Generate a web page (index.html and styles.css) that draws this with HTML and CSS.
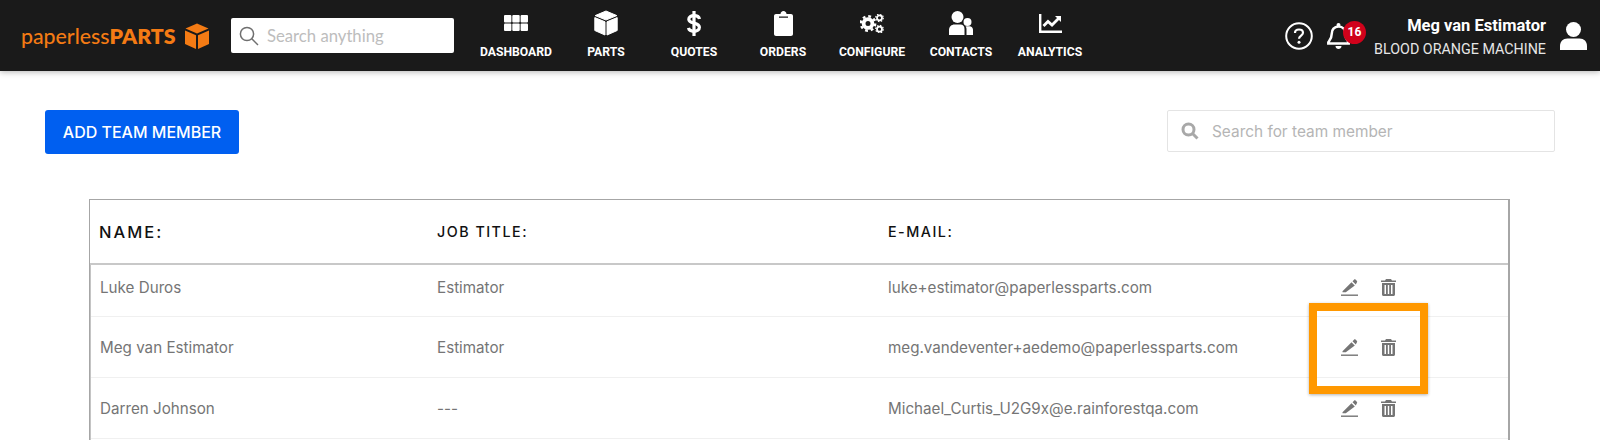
FILE: index.html
```html
<!DOCTYPE html>
<html lang="en">

<head>
    <meta charset="utf-8">
    <meta name="viewport" content="width=device-width, initial-scale=1.0">
    <title>Team members</title>

    <link rel="stylesheet" href="styles.css">
</head>

<body>
    <header class="topbar">
        <a class="logo">
            <span class="logo-text">paperless<b>PARTS</b></span>
            <svg class="logo-cube" viewBox="0 0 24 26"><path d="M12 0.500 23.500 5.500 12 10.500 0.500 5.500Z"/><path d="M0 7.500 11 12.300V26L0 21Z"/><path d="M24 7.500 13 12.300V26L24 21Z"/></svg>
        </a>
        <div class="global-search">
            <svg viewBox="0 0 20 20"><circle cx="8" cy="8" r="6.600"/><path d="M12.800 12.800 19 19"/></svg>
            <span>Search anything</span>
        </div>
        <nav class="main-nav">
            <a class="nav-item">
                <span class="nav-icon"><svg width="24" height="16" viewBox="0 0 24 16" fill="#fff"><rect width="7.400" height="7.400" rx="1"/><rect x="8.300" width="7.400" height="7.400" rx="1"/><rect x="16.600" width="7.400" height="7.400" rx="1"/><rect y="8.600" width="7.400" height="7.400" rx="1"/><rect x="8.300" y="8.600" width="7.400" height="7.400" rx="1"/><rect x="16.600" y="8.600" width="7.400" height="7.400" rx="1"/></svg></span>
                DASHBOARD
            </a>
            <a class="nav-item">
                <span class="nav-icon"><svg width="24" height="26" viewBox="0 0 24 26" fill="#fff" stroke="#fff" stroke-width="1" stroke-linejoin="round"><path d="M12 1 22.800 5.600 12 10 1.200 5.600Z"/><path d="M0.800 7.600 11 11.800V25L0.800 20.500Z"/><path d="M23.200 7.600 13 11.800V25L23.200 20.500Z"/></svg></span>
                PARTS
            </a>
            <a class="nav-item">
                <span class="nav-icon"><svg width="14" height="25" viewBox="0 0 14 25" fill="none" stroke="#fff" stroke-width="3.200"><path d="M12.500 8C12 5.500 10 4.700 7 4.700 4 4.700 1.800 5.900 1.800 8.300 1.800 10.900 4.500 11.500 7 12.100 9.700 12.800 12.400 13.500 12.400 16.300 12.400 18.900 10 20.300 7 20.300 4 20.300 2 19.300 1.500 16.900"/><path d="M7 0V25"/></svg></span>
                QUOTES
            </a>
            <a class="nav-item">
                <span class="nav-icon"><svg width="19" height="25" viewBox="0 0 19 25" fill="#fff"><path d="M2 3H6.500C6.500 1.400 7.800 0 9.500 0S12.500 1.400 12.500 3H17C18.100 3 19 3.900 19 5V23C19 24.100 18.100 25 17 25H2C0.900 25 0 24.100 0 23V5C0 3.900 0.900 3 2 3ZM5 5.500V6.800H14V5.500Z" fill-rule="evenodd"/></svg></span>
                ORDERS
            </a>
            <a class="nav-item">
                <span class="nav-icon"><svg width="24" height="19" viewBox="0 0 24 19" fill="none"><circle cx="8" cy="9.500" r="4.400" stroke="#fff" stroke-width="3.800"/><circle cx="8" cy="9.500" r="7.200" stroke="#fff" stroke-width="2.400" stroke-dasharray="2.800 2.860"/><circle cx="19.500" cy="3.800" r="2.500" stroke="#fff" stroke-width="1.800"/><circle cx="19.500" cy="3.800" r="3.800" stroke="#fff" stroke-width="1.200" stroke-dasharray="1.500 1.480"/><circle cx="19.500" cy="15.200" r="2.500" stroke="#fff" stroke-width="1.800"/><circle cx="19.500" cy="15.200" r="3.800" stroke="#fff" stroke-width="1.200" stroke-dasharray="1.500 1.480"/></svg></span>
                CONFIGURE
            </a>
            <a class="nav-item">
                <span class="nav-icon"><svg width="24" height="24" viewBox="0 0 24 24" fill="#fff"><circle cx="8.500" cy="6" r="6"/><path d="M0 24V19C0 15.700 2.500 13.500 5.500 13.500H11.500C14 13.500 15.500 15 15.500 18V24Z"/><circle cx="18.500" cy="11" r="4"/><path d="M17.500 24V18C17.500 17 17 16 16.500 15.500 17 15.200 18 15.200 19 15.200H20.500C22.500 15.200 24 16.700 24 18.800V24Z"/></svg></span>
                CONTACTS
            </a>
            <a class="nav-item">
                <span class="nav-icon"><svg width="23" height="19" viewBox="0 0 23 19" fill="none" stroke="#fff"><path d="M1.200 0V17.800H23" stroke-width="2.400"/><path d="M4.500 12 9 7.500 13 11 19.500 4.500" stroke-width="2.800"/><path d="M16 2H22V8Z" fill="#fff" stroke="none"/></svg></span>
                ANALYTICS
            </a>
        </nav>
        <div class="user-area">
            <svg class="help-icon" width="28" height="28" viewBox="0 0 28 28" fill="none" stroke="#fff"><circle cx="14" cy="14" r="12.800" stroke-width="2"/><path d="M10 11C10 8.500 12 7.500 14 7.500 16.200 7.500 18 8.800 18 10.800 18 13.500 14 13.800 14 16.800" stroke-width="2.200"/><circle cx="14" cy="20.300" r="1.500" fill="#fff" stroke="none"/></svg>
            <div class="bell">
                <svg width="23" height="26" viewBox="0 0 23 26" fill="none" stroke="#fff" stroke-width="2.500"><path d="M11.500 3.500C7 3.500 4.800 6.800 4.800 10.500 4.800 15.500 2.800 17.300 1.300 19.300V20.500H21.700V19.300C20.200 17.300 18.200 15.500 18.200 10.500 18.200 6.800 16 3.500 11.500 3.500Z"/><circle cx="11.500" cy="2" r="2" fill="#fff" stroke="none"/><path d="M8.500 23H14.500C14.500 24.700 13 26 11.500 26S8.500 24.700 8.500 23Z" fill="#fff" stroke="none"/></svg>
                <span class="badge">16</span>
            </div>
            <div class="user-names">
                <strong>Meg van Estimator</strong>
                <span>BLOOD ORANGE MACHINE</span>
            </div>
            <svg class="user-icon" width="27" height="28" viewBox="0 0 27 28" fill="#fff"><circle cx="13.500" cy="7.500" r="7.500"/><path d="M0 28V24C0 19.500 3 16.500 7.500 16.500H19.500C24 16.500 27 19.500 27 24V28Z"/></svg>
        </div>
    </header>

    <main class="page">
        <div class="toolbar">
            <button class="add-btn">ADD TEAM MEMBER</button>
            <div class="team-search">
                <svg viewBox="0 0 18 18"><circle cx="7.500" cy="7.500" r="5.500"/><path d="M11.500 11.500 16.500 16.500"/></svg>
                <span>Search for team member</span>
            </div>
        </div>

        <section class="team-table">
            <div class="table-head">
                <div class="head-name">NAME:</div>
                <div>JOB TITLE:</div>
                <div>E-MAIL:</div>
            </div>

            <div class="table-body">
                <div class="row">
                    <div>Luke Duros</div>
                    <div>Estimator</div>
                    <div>luke+estimator@paperlessparts.com</div>
                    <div class="actions">
                        <svg class="edit" viewBox="0 0 17 17"><path d="M1.500 12.200 10.500 3.200 13.800 6.500 4.800 13.200H1.500Z"/><path d="M11.500 2.200 13 0.700C13.500 0.200 14.200 0.200 14.700 0.700L15.800 1.800C16.300 2.300 16.300 3 15.800 3.500L14.800 5.500Z"/><rect y="15.500" width="17" height="1.400"/></svg>
                        <svg class="trash" viewBox="0 0 15 17"><path d="M5 0H10L11 1.500H15V3H0V1.500H4Z"/><path d="M1 4H14V15.500C14 16.300 13.300 17 12.500 17H2.500C1.700 17 1 16.300 1 15.500ZM3.500 6V15H5V6ZM6.800 6V15H8.200V6ZM10 6V15H11.500V6Z" fill-rule="evenodd"/></svg>
                    </div>
                </div>
                <div class="row">
                    <div>Meg van Estimator</div>
                    <div>Estimator</div>
                    <div>meg.vandeventer+aedemo@paperlessparts.com</div>
                    <div class="actions">
                        <svg class="edit" viewBox="0 0 17 17"><path d="M1.500 12.200 10.500 3.200 13.800 6.500 4.800 13.200H1.500Z"/><path d="M11.500 2.200 13 0.700C13.500 0.200 14.200 0.200 14.700 0.700L15.800 1.800C16.300 2.300 16.300 3 15.800 3.500L14.800 5.500Z"/><rect y="15.500" width="17" height="1.400"/></svg>
                        <svg class="trash" viewBox="0 0 15 17"><path d="M5 0H10L11 1.500H15V3H0V1.500H4Z"/><path d="M1 4H14V15.500C14 16.300 13.300 17 12.500 17H2.500C1.700 17 1 16.300 1 15.500ZM3.500 6V15H5V6ZM6.800 6V15H8.200V6ZM10 6V15H11.500V6Z" fill-rule="evenodd"/></svg>
                    </div>
                    <div class="highlight"></div>
                </div>
                <div class="row">
                    <div>Darren Johnson</div>
                    <div>---</div>
                    <div>Michael_Curtis_U2G9x@e.rainforestqa.com</div>
                    <div class="actions">
                        <svg class="edit" viewBox="0 0 17 17"><path d="M1.500 12.200 10.500 3.200 13.800 6.500 4.800 13.200H1.500Z"/><path d="M11.500 2.200 13 0.700C13.500 0.200 14.200 0.200 14.700 0.700L15.800 1.800C16.300 2.300 16.300 3 15.800 3.500L14.800 5.500Z"/><rect y="15.500" width="17" height="1.400"/></svg>
                        <svg class="trash" viewBox="0 0 15 17"><path d="M5 0H10L11 1.500H15V3H0V1.500H4Z"/><path d="M1 4H14V15.500C14 16.300 13.300 17 12.500 17H2.500C1.700 17 1 16.300 1 15.500ZM3.500 6V15H5V6ZM6.800 6V15H8.200V6ZM10 6V15H11.500V6Z" fill-rule="evenodd"/></svg>
                    </div>
                </div>
            </div>
        </section>
    </main>
</body>

</html>
```

FILE: styles.css
```css
* {
    box-sizing: border-box;
}

html,
body {
    height: 100%;
    margin: 0;
    overflow: hidden;
}

body {
    background: #fff;
    font-family: "Inter", "Liberation Sans", sans-serif;
}

/* top bar */

.topbar {
    display: flex;
    align-items: center;
    height: 71px;
    padding-left: 21px;
    background: #1a1a1a;
    box-shadow: 0 1px 6px rgba(0, 0, 0, 0.3);
}

.logo {
    display: flex;
    align-items: center;
    justify-content: space-between;
    width: 188px;
    height: 36px;
    color: #f47b14;
    font-family: "Lato", sans-serif;
    font-size: 21.300px;
    font-weight: 500;
}

.logo-text b {
    font-weight: 800;
}

.logo-cube {
    width: 24px;
    height: 26px;
    fill: #f47b14;
}

.global-search {
    display: flex;
    align-items: center;
    width: 223px;
    height: 35px;
    margin-left: 22px;
    padding-left: 8px;
    background: #fff;
    border-radius: 2px;
    color: #bdbdbd;
    font-family: "Lato", sans-serif;
    font-size: 16.700px;
}

.global-search svg {
    width: 20px;
    height: 20px;
    margin-right: 8px;
    fill: none;
    stroke: #6f6f6f;
    stroke-width: 1.500;
}

.main-nav {
    display: grid;
    grid-template-columns: 90px 90px 86px 92px 86px 92px 86px;
    align-self: flex-start;
    margin-left: 17px;
    padding-top: 9px;
}

.nav-item {
    display: flex;
    flex-direction: column;
    align-items: center;
    gap: 8px;
    color: #fff;
    font-family: "Roboto", sans-serif;
    font-size: 12.200px;
    font-weight: 700;
    line-height: 14px;
}

.nav-icon {
    display: flex;
    align-items: center;
    justify-content: center;
    height: 28px;
}

.user-area {
    display: flex;
    align-items: center;
    margin-left: auto;
    padding-right: 13px;
}

.bell {
    position: relative;
    width: 23px;
    height: 26px;
    margin-left: 14px;
}

.bell svg {
    display: block;
}

.badge {
    position: absolute;
    top: -2px;
    left: 16px;
    width: 23px;
    height: 23px;
    background: #d0021b;
    border-radius: 50%;
    color: #fff;
    font-family: "Roboto", sans-serif;
    font-size: 12px;
    font-weight: 700;
    line-height: 23px;
    text-align: center;
}

.user-names {
    display: flex;
    flex-direction: column;
    align-items: flex-end;
    gap: 6px;
    width: 196px;
    margin-top: 2px;
    color: #fff;
    font-family: "Roboto", sans-serif;
}

.user-names strong {
    font-size: 16.500px;
}

.user-names span {
    color: #e6e6e6;
    font-size: 14.300px;
}

.user-icon {
    margin-left: 14px;
}

/* page */

.page {
    padding: 39px 45px 0;
}

.toolbar {
    display: flex;
    justify-content: space-between;
    align-items: flex-start;
}

.add-btn {
    width: 194px;
    height: 44px;
    background: #005ff0;
    border: 0;
    border-radius: 3px;
    color: #fff;
    font-family: "Inter", sans-serif;
    font-size: 16px;
    font-weight: 500;
}

.team-search {
    display: flex;
    align-items: center;
    width: 388px;
    height: 42px;
    padding-left: 13px;
    border: 1px solid #e4e4e4;
    border-radius: 2px;
    color: #b5b5b5;
    font-size: 15.400px;
}

.team-search svg {
    width: 18px;
    height: 18px;
    margin-right: 13px;
    fill: none;
    stroke: #a8a8a8;
    stroke-width: 3;
}

.team-table {
    width: 1421px;
    margin: 45px 0 0 44px;
    border: 1px solid #a6a6a6;
    border-right-width: 2px;
    border-bottom: 0;
}

.table-head,
.row {
    display: grid;
    align-items: center;
}

.table-head {
    grid-template-columns: 347px 451px 1fr;
    height: 65px;
    border-bottom: 2px solid #c8c8c8;
    color: #111;
    font-size: 14.300px;
    font-weight: 500;
    letter-spacing: 1.500px;
}

.table-head > div:first-child {
    padding-left: 9px;
}

.head-name {
    font-size: 16.500px;
    letter-spacing: 2px;
}

.table-body {
    height: 200px;
    border-left: 1px solid #c4c4c4;
}

.row {
    position: relative;
    grid-template-columns: 337px 451px 418px 1fr;
    height: 61px;
    padding-left: 9px;
    border-bottom: 1px solid #f0f0f0;
    color: #757575;
    font-size: 15.200px;
}

/* first row is shorter, its text sits above the middle */
.row:first-child {
    height: 52px;
    padding-bottom: 7px;
}

.actions {
    display: flex;
    align-items: center;
    gap: 23px;
    margin-left: 35px;
}

.edit {
    width: 17px;
    height: 17px;
    fill: #757575;
}

.trash {
    width: 15px;
    height: 17px;
    fill: #757575;
}

/* the orange box drawn on the screenshot */

.highlight {
    position: absolute;
    top: -14px;
    left: 1218px;
    width: 119px;
    height: 91px;
    border: 8px solid #ff9800;
    box-shadow: 0 1px 3px rgba(0, 0, 0, 0.3);
}
```
